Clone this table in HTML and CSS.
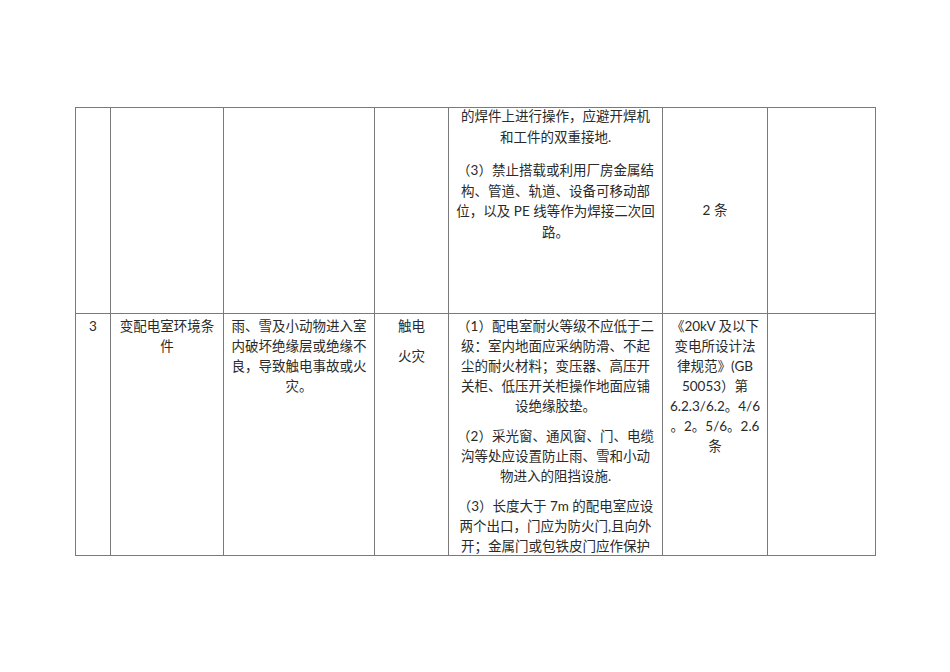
FILE: index.html
```html
<!DOCTYPE html>
<html lang="zh">
<head>
<meta charset="utf-8">
<title>变配电室</title>
<link rel="stylesheet" href="styles.css">
</head>
<body>
<div class="page">
  <table class="grid">
    <colgroup>
      <col class="c1"><col class="c2"><col class="c3"><col class="c4"><col class="c5"><col class="c6"><col class="c7">
    </colgroup>
    <tr class="row-a">
      <td></td>
      <td></td>
      <td></td>
      <td></td>
      <td class="top-cont">
        <p>的焊件上进行操作，应避开焊机<br>和工件的双重接地.</p>
        <p>（3）禁止搭载或利用厂房金属结<br>构、管道、轨道、设备可移动部<br>位，以及 PE 线等作为焊接二次回<br>路。</p>
      </td>
      <td class="mid">2 条</td>
      <td></td>
    </tr>
    <tr class="row-b">
      <td><div class="clip">3</div></td>
      <td><div class="clip"><p>变配电室环境条<br>件</p></div></td>
      <td><div class="clip"><p>雨、雪及小动物进入室<br>内破坏绝缘层或绝缘不<br>良，导致触电事故或火<br>灾。</p></div></td>
      <td><div class="clip"><p>触电</p><p>火灾</p></div></td>
      <td><div class="clip">
        <p>（1）配电室耐火等级不应低于二<br>级：室内地面应采纳防滑、不起<br>尘的耐火材料；变压器、高压开<br>关柜、低压开关柜操作地面应铺<br>设绝缘胶垫。</p>
        <p>（2）采光窗、通风窗、门、电缆<br>沟等处应设置防止雨、雪和小动<br>物进入的阻挡设施.</p>
        <p class="gap">（3）长度大于 7m 的配电室应设<br>两个出口，门应为防火门,且向外<br>开；金属门或包铁皮门应作保护</p>
      </div></td>
      <td><div class="clip"><p>《20kV 及以下<br>变电所设计法<br>律规范》(GB<br>50053）第<br>6.2.3/6.2。4/6<br>。2。5/6。2.6<br>条</p></div></td>
      <td><div class="clip"></div></td>
    </tr>
  </table>
</div>
</body>
</html>
```

FILE: styles.css
```css
html, body {
  margin: 0;
  padding: 0;
  background: #ffffff;
}
body {
  width: 950px;
  height: 672px;
  overflow: hidden;
  font-family: Lato, "Noto Sans CJK SC", sans-serif;
  font-size: 13.5px;
  color: #2a2a2a;
}
.page {
  padding: 107px 0 0 75px;
}
.grid {
  border-collapse: collapse;
  table-layout: fixed;
  width: 800px;
}
.c1 { width: 35px; }
.c2 { width: 113px; }
.c3 { width: 151px; }
.c4 { width: 74px; }
.c5 { width: 214px; }
.c6 { width: 105px; }
.c7 { width: 108px; }
.grid td {
  border: 1px solid #7a7a7a;
  padding: 0;
  vertical-align: top;
  text-align: center;
  line-height: 20.5px;
  white-space: nowrap;
}
.grid p {
  margin: 0 0 10px;
}
.grid p:last-child {
  margin-bottom: 0;
}
.row-a td {
  height: 205px;
}
.top-cont p:first-child {
  margin-top: -2px;
}
.top-cont p {
  margin-bottom: 13px;
}
.grid td.mid {
  vertical-align: middle;
}
.clip {
  height: 241px;
  overflow: hidden;
  padding: 2px 4px 0;
  box-sizing: border-box;
  line-height: 20px;
}
.grid .clip .gap {
  margin-top: 3px;
}
```
